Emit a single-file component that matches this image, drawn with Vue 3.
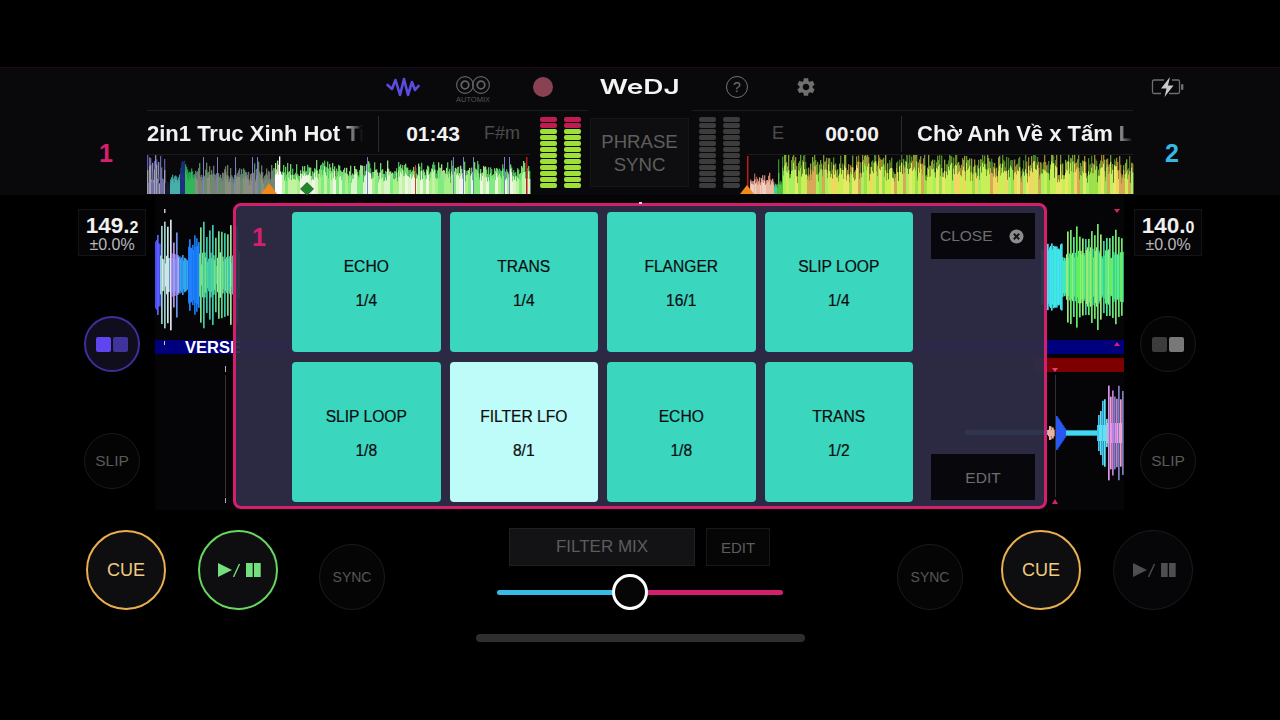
<script setup>
// seeded so the waveforms come out the same on every load
function rng(seed) {
  let s = seed
  return () => {
    s = (s * 1664525 + 1013904223) % 4294967296
    return s / 4294967296
  }
}

const pick = (r, list) => list[Math.floor(r() * list.length)]

function overview(width, height, seed, shape) {
  const r = rng(seed)
  const bars = []
  let colorHold = null
  for (let x = 0; x < width; x++) {
    // colours stay for a couple of pixels so the strip reads as columns, not noise
    const next = shape(x, r)
    if (!colorHold || x % 3 === 0 || next.fixed) colorHold = next
    const h1 = Math.min(height, next.amp * (0.78 + r() * 0.34))
    const h2 = h1 * (0.6 + r() * 0.25)
    bars.push({ x, y: height - h1, h: h1, c: colorHold.back })
    bars.push({ x, y: height - h2, h: h2, c: colorHold.front })
  }
  return bars
}

const leftOverview = overview(383, 39, 7, (x, r) => {
  if (x < 18) return { back: pick(r, ['#5d5da8', '#8a8ac0', '#1a1a30', '#6a6ab0']), front: pick(r, ['#6f6fa0', '#a0a0b0']), amp: r() > 0.3 ? 38 : 14, fixed: true }
  if (x < 23) return { back: '#14142a', front: '#181830', amp: 12, fixed: true }
  if (x < 33) return { back: '#3a9a9a', front: '#46b0a8', amp: 18, fixed: true }
  if (x < 38) return { back: '#1a2a70', front: '#203080', amp: 30, fixed: true }
  if (x < 46) return { back: '#20a048', front: '#30b858', amp: 27, fixed: true }
  if (x < 128) return { back: pick(r, ['#667a5c', '#726f78', '#5e7e70', '#5a8a68']), front: pick(r, ['#8a9080', '#7e8078', '#6e8a70']), amp: 17 + r() * 13 }
  if (x < 133) return { back: x === 132 ? '#ffffff' : '#a8e088', front: '#ffffff', amp: x === 132 ? 39 : 30, fixed: true }
  return {
    back: pick(r, ['#5ec85e', '#78d870', '#a0e090', '#48b860']),
    front: pick(r, ['#a8f088', '#d8f5c8', '#eef5e4', '#80ec80', '#c0f4a0']),
    amp: 21 + r() * 11
  }
})

const rightOverview = overview(386, 39, 23, (x, r) => {
  if (x < 3) return { back: '#000', front: '#000', amp: 0, fixed: true }
  if (x < 27) return { back: pick(r, ['#c88070', '#d8a090', '#a06050']), front: pick(r, ['#f0d0c0', '#e8b8a0']), amp: 20 - (x % 7), fixed: true }
  if (x < 30) return { back: '#30c080', front: '#40d0a0', amp: 10, fixed: true }
  if (x < 35) return { back: '#3a8a30', front: '#50c040', amp: x === 31 ? 38 : 12, fixed: true }
  return {
    back: pick(r, ['#6a9a30', '#5a8a28', '#8aa838', '#a08a30', '#4a7a28']),
    front: pick(r, ['#c8ee58', '#9ce04c', '#e8e868', '#f0d860', '#a8f060', '#d8a858', '#c8f050']),
    amp: r() > 0.2 ? 31 + r() * 10 : 22
  }
})

function bigWave(from, to, center, seed, shape) {
  const r = rng(seed)
  const bars = []
  for (let x = from; x < to; x++) {
    const { amp, color } = shape(x, r)
    bars.push({ x, y: center - amp, h: amp * 2, c: color })
  }
  return bars
}

// x values here are relative to the stage, which starts at 155
const leftTop = bigWave(0, 84, 80, 11, (x, r) => {
  if (x < 5) return { amp: 30 + r() * 14, color: pick(r, ['#4a4ef0', '#5a60ff']) }
  if (x < 16) return { amp: x % 3 === 0 ? 44 + r() * 14 : 10 + r() * 12, color: pick(r, ['#c8e8e0', '#9ad0d0', '#e0e0f0', '#6a8ac8']) }
  if (x < 24) return { amp: x % 3 === 0 ? 32 + r() * 14 : 14 + r() * 8, color: pick(r, ['#b090f0', '#c8a0f0', '#7090e8']) }
  if (x < 33) return { amp: 14 + r() * 8, color: pick(r, ['#3090f0', '#30a8e8']) }
  if (x < 44) return { amp: 24 + r() * 16, color: pick(r, ['#1878f0', '#2080ff']) }
  return { amp: x % 3 === 0 ? 36 + r() * 18 : 8 + r() * 16, color: pick(r, ['#50d890', '#78e088', '#40c8a8', '#a0e8a0']) }
})

const rightTop = bigWave(886, 968, 82, 31, (x, r) => {
  if (x < 907) return { amp: 26 + r() * 8, color: pick(r, ['#40e8e0', '#40d8f0']) }
  if (x < 911) return { amp: 16 + r() * 4, color: '#40e8c0' }
  return { amp: x % 3 === 0 ? 36 + r() * 18 : 18 + r() * 12, color: pick(r, ['#50e890', '#70e870', '#a0e878', '#30d8a0', '#60f060']) }
})

const rightBottom = bigWave(893, 968, 61, 41, (x, r) => {
  if (x < 899) return { amp: 2 + r() * 5, color: '#f0b0a0' }
  if (x < 901) return { amp: 0, color: '#000' }
  if (x < 911) return { amp: 17 - (x - 901) * 1.5, color: '#2858f0' }
  if (x < 942) return { amp: 2.500, color: '#40d8f0' }
  if (x < 952) return { amp: x % 2 ? 14 + r() * 20 : 8, color: pick(r, ['#40c8f8', '#60e0f0']) }
  return { amp: x % 2 ? 28 + r() * 22 : 10, color: pick(r, ['#e090f0', '#c080e0', '#f0a0d0', '#8080c0']) }
})

const meterSegs = Array.from({ length: 12 }, (_, i) => i)

const pads = [
  { name: 'ECHO', val: '1/4' },
  { name: 'TRANS', val: '1/4' },
  { name: 'FLANGER', val: '16/1' },
  { name: 'SLIP LOOP', val: '1/4' },
  { name: 'SLIP LOOP', val: '1/8' },
  { name: 'FILTER LFO', val: '8/1', active: true },
  { name: 'ECHO', val: '1/8' },
  { name: 'TRANS', val: '1/2' }
]
</script>

<template>
  <div class="app">
    <div class="top-band">
      <div class="nav">
        <div class="nav-item w70">
          <svg width="34" height="22" viewBox="0 0 34 22" fill="none" stroke="#5a4ce0" stroke-width="2.600" stroke-linejoin="round" stroke-linecap="round">
            <path d="M1.500 9 L6 13 L9.500 4 L14 19 L18 3 L22 19 L26 6 L29 14 L32.500 10" />
          </svg>
        </div>
        <div class="nav-item w70 automix">
          <svg width="34" height="20" viewBox="0 0 34 20" fill="none" stroke="#626262" stroke-width="1.200">
            <circle cx="9" cy="10" r="8.400" />
            <circle cx="25" cy="10" r="8.400" />
            <circle cx="9" cy="10" r="3.800" stroke-width="1.800" />
            <circle cx="25" cy="10" r="3.800" stroke-width="1.800" />
          </svg>
          <span class="automix-label">AUTOMIX</span>
        </div>
        <div class="nav-item w70"><span class="rec"></span></div>
        <div class="nav-item logo-box"><span class="logo">WeDJ</span></div>
        <div class="nav-item w70"><span class="help">?</span></div>
        <div class="nav-item w68">
          <svg width="22" height="22" viewBox="0 0 24 24" fill="#6f6f6f">
            <path d="M19.14 12.94c.04-.3.06-.61.06-.94 0-.32-.02-.64-.07-.94l2.03-1.58c.18-.14.23-.41.12-.61l-1.92-3.32c-.12-.22-.37-.29-.59-.22l-2.39.96c-.5-.38-1.03-.7-1.62-.94l-.36-2.54c-.04-.24-.24-.41-.48-.41h-3.84c-.24 0-.43.17-.47.41l-.36 2.54c-.59.24-1.13.57-1.62.94l-2.39-.96c-.22-.08-.47 0-.59.22L2.74 8.87c-.12.21-.08.47.12.61l2.03 1.58c-.05.3-.09.63-.09.94s.02.64.07.94l-2.03 1.58c-.18.14-.23.41-.12.61l1.92 3.32c.12.22.37.29.59.22l2.39-.96c.5.38 1.03.7 1.62.94l.36 2.54c.05.24.24.41.48.41h3.84c.24 0 .44-.17.47-.41l.36-2.54c.59-.24 1.13-.56 1.62-.94l2.39.96c.22.08.47 0 .59-.22l1.92-3.32c.12-.22.07-.47-.12-.61l-2.01-1.58zM12 15.6c-1.98 0-3.6-1.62-3.6-3.6s1.62-3.6 3.6-3.6 3.6 1.62 3.6 3.6-1.62 3.6-3.6 3.6z" />
          </svg>
        </div>
        <div class="nav-item battery">
          <svg width="34" height="22" viewBox="0 0 34 22" fill="none">
            <path d="M13 4 H3 a1.500 1.500 0 0 0 -1.500 1.500 V16 a1.500 1.500 0 0 0 1.500 1.500 H10 M21 4 H27 a1.500 1.500 0 0 1 1.500 1.500 V16 a1.500 1.500 0 0 1 -1.500 1.500 H18" stroke="#6e6e6e" stroke-width="1.300" />
            <rect x="30" y="8" width="2.400" height="6" rx="1" fill="#6e6e6e" />
            <path d="M19 1 L10 12.500 H15.500 L13.500 21 L22.500 9.500 H17 Z" fill="#c8c8c8" />
          </svg>
        </div>
      </div>

      <div class="deck-row">
        <div class="deck-num pink">1</div>
        <div class="group group-left">
          <div class="deck">
            <div class="info">
              <div class="title title-left">2in1 Truc Xinh Hot Ti</div>
              <span class="divider"></span>
              <div class="time time-left">01:43</div>
              <div class="key key-left">F#m</div>
            </div>
            <svg class="overview" width="383" height="39" viewBox="0 0 383 39">
              <rect v-for="(b, i) in leftOverview" :key="i" :x="b.x" :y="b.y" width="1.300" :height="b.h" :fill="b.c" />
              <rect v-for="x in [56, 70, 88, 105, 110, 220, 306, 316, 326, 357, 362]" :key="x" :x="x" y="2" width="1" height="37" fill="#7c80c8" />
              <rect x="268" y="10" width="1" height="29" fill="#c04020" />
              <rect x="379" y="2" width="1.500" height="37" fill="#c01818" />
              <path d="M114 39 L122 28 L130 39 Z" fill="#f08a1c" />
              <path d="M160 27.500 L166.500 34 L160 40 L153.500 34 Z" fill="#1c8a28" stroke="#0c3010" stroke-width="0.600" />
            </svg>
          </div>
          <div class="meter">
            <div class="meter-col" v-for="c in 2" :key="c">
              <span v-for="s in meterSegs" :key="s" class="seg" :class="s < 2 ? 'seg-red' : 'seg-green'"></span>
            </div>
          </div>
        </div>

        <div class="phrase">PHRASE<br />SYNC</div>

        <div class="group group-right">
          <div class="meter meter-off">
            <div class="meter-col" v-for="c in 2" :key="c">
              <span v-for="s in meterSegs" :key="s" class="seg seg-off"></span>
            </div>
          </div>
          <div class="deck deck-right">
            <div class="info">
              <div class="key key-right">E</div>
              <div class="time time-right">00:00</div>
              <span class="divider divider-right"></span>
              <div class="title title-right">Chờ Anh Về x Tấm L</div>
            </div>
            <svg class="overview" width="386" height="39" viewBox="0 0 386 39">
              <rect v-for="(b, i) in rightOverview" :key="i" :x="b.x" :y="b.y" width="1.300" :height="b.h" :fill="b.c" />
              <rect x="0" y="1" width="1.500" height="38" fill="#c01818" />
              <path d="M-7 39 L0 30 L7 39 Z" fill="#f08a1c" />
            </svg>
          </div>
        </div>
        <div class="deck-num num-right blue">2</div>
      </div>
    </div>

    <div class="stage">
      <div class="side side-left">
        <div class="bpm">
          <div class="bpm-main">149.<small>2</small></div>
          <div class="bpm-sub">±0.0%</div>
        </div>
        <div class="round phase phase-on"><span class="sq sq-a"></span><span class="sq sq-b"></span></div>
        <div class="round slip">SLIP</div>
      </div>

      <div class="center">
        <svg class="wave wave-top" width="969" height="145" viewBox="0 0 969 145">
          <rect v-for="(b, i) in leftTop" :key="'l' + i" :x="b.x" :y="b.y" width="1.700" :height="b.h" :fill="b.c" />
          <rect v-for="(b, i) in rightTop" :key="'r' + i" :x="b.x" :y="b.y" width="1.700" :height="b.h" :fill="b.c" />
          <rect x="9" y="14" width="1.500" height="4" fill="#c8c8c8" />
          <path d="M959 14 L965 14 L962 18 Z" fill="#d6206f" />
        </svg>
        <div class="phrase-bar">
          <span class="tick"></span>
          <span class="verse">VERSE</span>
          <span class="cue-mark"></span>
        </div>
        <div class="red-row"><span class="red-bar"></span></div>
        <svg class="wave wave-bottom" width="969" height="138" viewBox="0 0 969 138">
          <rect x="810" y="58" width="83" height="5" fill="#40d8f0" />
          <rect v-for="(b, i) in rightBottom" :key="i" :x="b.x" :y="b.y" width="1.700" :height="b.h" :fill="b.c" />
          <rect x="70" y="-6" width="1" height="6" fill="#b0b0b0" />
          <rect x="70" y="3" width="1" height="122" fill="#333" />
          <rect x="70" y="126" width="1" height="5" fill="#b0b0b0" />
          <path d="M897 -4 L903 -4 L900 0 Z" fill="#e04080" />
          <rect x="900" y="3" width="1" height="122" fill="#303030" />
          <path d="M897 132 L903 132 L900 127 Z" fill="#d6206f" />
        </svg>

        <!-- fx pad panel sits over the waveforms -->
        <div class="panel">
          <div class="panel-num">1</div>
          <div class="pads">
            <div v-for="(p, i) in pads" :key="i" class="pad" :class="{ 'pad-on': p.active }">
              <span>{{ p.name }}</span>
              <span>{{ p.val }}</span>
            </div>
          </div>
          <div class="panel-side">
            <div class="panel-btn close-btn">
              <span>CLOSE</span>
              <svg width="15" height="15" viewBox="0 0 15 15">
                <circle cx="7.500" cy="7.500" r="7" fill="#8c8c8c" />
                <path d="M4.800 4.800 L10.200 10.200 M10.200 4.800 L4.800 10.200" stroke="#15151a" stroke-width="2" />
              </svg>
            </div>
            <div class="panel-btn edit-btn">EDIT</div>
          </div>
        </div>
        <span class="panel-tick"></span>
      </div>

      <div class="side side-right">
        <div class="bpm">
          <div class="bpm-main">140.<small>0</small></div>
          <div class="bpm-sub">±0.0%</div>
        </div>
        <div class="round phase"><span class="sq sq-c"></span><span class="sq sq-d"></span></div>
        <div class="round slip">SLIP</div>
      </div>
    </div>

    <div class="controls">
      <div class="big cue">CUE</div>
      <div class="big play play-on">
        <svg class="play-icon" width="44" height="14" viewBox="0 0 44 14" fill="currentColor">
          <path d="M0 0 L14 7 L0 14 Z" />
          <path d="M15.500 14 L21.500 1" stroke="currentColor" stroke-width="1.400" fill="none" />
          <rect x="28" y="0" width="6.700" height="14" />
          <rect x="36" y="0" width="6.700" height="14" />
        </svg>
      </div>
      <div class="sync sync-left">SYNC</div>

      <div class="mixer">
        <div class="mixer-top">
          <div class="filter-mix">FILTER MIX</div>
          <div class="mixer-edit">EDIT</div>
        </div>
        <div class="slider">
          <span class="slider-blue"></span>
          <span class="slider-pink"></span>
          <span class="knob"></span>
        </div>
      </div>

      <div class="sync sync-right">SYNC</div>
      <div class="big cue cue-right">CUE</div>
      <div class="big play play-off">
        <svg class="play-icon" width="44" height="14" viewBox="0 0 44 14" fill="currentColor">
          <path d="M0 0 L14 7 L0 14 Z" />
          <path d="M15.500 14 L21.500 1" stroke="currentColor" stroke-width="1.400" fill="none" />
          <rect x="28" y="0" width="6.700" height="14" />
          <rect x="36" y="0" width="6.700" height="14" />
        </svg>
      </div>
    </div>

    <div class="home-bar"></div>
  </div>
</template>

<style>
html,
body {
  background: #000;
}
</style>

<style scoped>
.app {
  width: 1280px;
  height: 720px;
  background: #000;
  overflow: hidden;
  font-family: "Liberation Sans", Arial, sans-serif;
  display: flex;
  flex-direction: column;
}

.top-band {
  margin-top: 67px;
  height: 128px;
  box-sizing: border-box;
  background: #09090b;
  border-top: 1px solid #1c0a1a;
  flex: none;
}

.nav {
  height: 42px;
  display: flex;
  padding-left: 368px;
  padding-bottom: 4px;
  box-sizing: border-box;
}

.nav-item {
  display: flex;
  align-items: center;
  justify-content: center;
  height: 100%;
}

.w70 {
  width: 70px;
}

.w68 {
  width: 68px;
}

.automix {
  flex-direction: column;
  gap: 1px;
  padding-top: 4px;
  box-sizing: border-box;
}

.automix-label {
  font-size: 7.500px;
  color: #555;
  line-height: 8px;
}

.rec {
  width: 20px;
  height: 20px;
  border-radius: 50%;
  background: #8a4252;
}

.logo-box {
  width: 124px;
}

.logo {
  font-family: Inter, sans-serif;
  font-size: 20px;
  font-weight: 600;
  color: #f4f4f4;
  transform: scaleX(1.4);
}

.help {
  width: 20px;
  height: 20px;
  border: 1px solid #707070;
  border-radius: 50%;
  color: #707070;
  font-size: 14px;
  line-height: 20px;
  text-align: center;
}

.battery {
  margin-left: 311px;
}

.deck-row {
  display: flex;
  height: 85px;
}

.deck-num {
  width: 147px;
  box-sizing: border-box;
  padding-left: 65px;
  padding-top: 2px;
  display: flex;
  align-items: center;
  justify-content: center;
  font-size: 25px;
  font-weight: 700;
  flex: none;
}

.num-right {
  padding-left: 0;
  padding-right: 69px;
}

.pink {
  color: #d61f6e;
}

.blue {
  color: #35b8e6;
}

.group {
  width: 441px;
  flex: none;
  display: flex;
  border-top: 1px solid #1c1c1e;
  box-sizing: border-box;
}

.group-left {
  margin-right: 2px;
}

.group-right {
  margin-left: 3px;
  padding-left: 7px;
}

.deck {
  width: 383px;
  flex: none;
}

.deck-right {
  width: 386px;
  margin-left: 7px;
  margin-right: -2px;
}

.info {
  height: 44px;
  box-sizing: border-box;
  padding-top: 2px;
  display: flex;
  align-items: center;
  border-bottom: 1px solid #1c1c1e;
}

.title {
  font-size: 22px;
  font-weight: 700;
  color: #f2f2f2;
  white-space: nowrap;
  overflow: hidden;
}

.title-left {
  width: 216px;
  flex: none;
  margin-right: 15px;
  mask-image: linear-gradient(to right, #000 90%, transparent 100%);
}

.title-right {
  flex: 1;
  margin-left: 15px;
  min-width: 0;
  mask-image: linear-gradient(to right, #000 90%, transparent 100%);
}

.divider {
  width: 1px;
  height: 36px;
  background: #2a2a2c;
  flex: none;
}

.time {
  font-size: 21px;
  font-weight: 700;
  color: #f2f2f2;
  width: 90px;
  text-align: center;
  flex: none;
}

.time-left {
  margin-left: 9px;
}

.key {
  font-size: 18px;
  color: #4c4c4c;
  flex: none;
}

.key-left {
  margin-left: 6px;
}

.key-right {
  margin-left: 25px;
  width: 12px;
  text-align: center;
}

.time-right {
  margin-left: 23px;
}

.divider-right {
  margin-left: 4px;
}

.overview {
  display: block;
  overflow: visible;
  filter: blur(0.5px);
}

.meter {
  margin-left: 10px;
  padding-top: 6px;
  display: flex;
  gap: 7px;
  height: 72px;
}

.meter-off {
  margin-left: 0;
}

.meter-col {
  width: 17px;
  display: flex;
  flex-direction: column;
  justify-content: space-between;
  height: 71px;
}

.seg {
  height: 4.700px;
  border-radius: 2px;
  display: block;
}

.seg-red {
  background: #c01c52;
}

.seg-green {
  background: #9ee038;
}

.seg-off {
  background: #3c3c3c;
}

.phrase {
  width: 99px;
  height: 69px;
  margin-top: 8px;
  box-sizing: border-box;
  border: 1px solid #151517;
  background: #0e0e10;
  flex: none;
  color: #5e5e5e;
  font-size: 18.600px;
  line-height: 23px;
  text-align: center;
  padding-top: 11px;
}

.stage {
  height: 315px;
  display: flex;
  flex: none;
}

.side {
  display: flex;
  flex-direction: column;
  align-items: center;
  box-sizing: border-box;
  flex: none;
}

.side-left {
  width: 155px;
  padding-left: 78px;
  padding-right: 9px;
}

.side-right {
  width: 156px;
  padding-left: 10px;
  padding-right: 78px;
}

.bpm {
  margin-top: 14px;
  width: 68px;
  height: 47px;
  box-sizing: border-box;
  border: 1px solid #141416;
  background: #050507;
  text-align: center;
  color: #f0f0f0;
  flex: none;
}

.bpm-main {
  font-size: 22.500px;
  font-weight: 700;
  line-height: 22px;
  margin-top: 5px;
}

.bpm-main small {
  font-size: 16px;
}

.bpm-sub {
  font-size: 16px;
  line-height: 12px;
  color: #b8b8b8;
}

.round {
  width: 56px;
  height: 56px;
  box-sizing: border-box;
  border-radius: 50%;
  border: 1.500px solid #1a1a1d;
  background: #040405;
  display: flex;
  align-items: center;
  justify-content: center;
  flex: none;
}

.phase {
  margin-top: 60px;
  gap: 2px;
}

.phase-on {
  border: 2px solid #3c2f9c;
  background: #100e1c;
}

.sq {
  width: 15px;
  height: 15px;
  border-radius: 2px;
}

.sq-a {
  background: #5f45f0;
}

.sq-b {
  background: #40349c;
}

.sq-c {
  background: #3c3c3c;
}

.sq-d {
  background: #787878;
}

.slip {
  margin-top: 61px;
  color: #5a5a5a;
  font-size: 15.500px;
}

.center {
  width: 969px;
  flex: none;
  position: relative;
  background: #050507;
}

.wave {
  display: block;
  overflow: visible;
  filter: blur(0.5px);
}

.phrase-bar {
  height: 14px;
  background: #00007c;
  position: relative;
  display: flex;
  align-items: center;
  padding-left: 30px;
}

.tick {
  position: absolute;
  left: 9px;
  top: 1px;
  width: 1px;
  height: 4px;
  background: #c8c8c8;
}

.cue-mark {
  position: absolute;
  right: 4px;
  top: 2px;
  width: 0;
  height: 0;
  border-left: 3px solid transparent;
  border-right: 3px solid transparent;
  border-bottom: 4px solid #d6206f;
}

.verse {
  color: #fff;
  font-size: 16.500px;
  font-weight: 700;
  line-height: 14px;
}

.red-row {
  height: 18px;
  padding-top: 4px;
  box-sizing: border-box;
  display: flex;
  justify-content: flex-end;
}

.red-bar {
  width: 90px;
  height: 14px;
  background: #7c0000;
  display: block;
}

.panel {
  position: absolute;
  left: 78px;
  top: 8px;
  width: 814px;
  height: 306px;
  box-sizing: border-box;
  background: rgba(46, 43, 70, 0.95);
  border: 3px solid #d41f6f;
  border-radius: 8px;
  display: flex;
}

.panel-num {
  width: 56px;
  flex: none;
  padding-right: 10px;
  color: #d41f6f;
  font-size: 25px;
  font-weight: 700;
  text-align: center;
  padding-top: 17px;
  box-sizing: border-box;
}

.pads {
  width: 621px;
  margin-top: 6px;
  flex: none;
  display: grid;
  grid-template-columns: repeat(4, 148.500px);
  grid-template-rows: 140px 140px;
  column-gap: 9px;
  row-gap: 10px;
}

.pad {
  background: #3ad6bd;
  border-radius: 4px;
  display: flex;
  flex-direction: column;
  align-items: center;
  justify-content: center;
  gap: 16px;
  padding-top: 4px;
  box-sizing: border-box;
  font-size: 15.600px;
  line-height: 18px;
  color: #0c0c10;
  -webkit-text-stroke: 0.2px #0c0c10;
}

.pad-on {
  background: #bdfcf8;
}

.panel-side {
  flex: 1;
  padding: 7px 9px 6px 18px;
  display: flex;
  flex-direction: column;
  justify-content: space-between;
}

.panel-btn {
  background: #08080c;
  color: #6e6e6e;
  font-size: 15.500px;
  display: flex;
  align-items: center;
  box-sizing: border-box;
}

.close-btn {
  width: 104px;
  height: 46px;
  padding-left: 9px;
  gap: 16px;
}

.edit-btn {
  width: 104px;
  height: 46px;
  padding-top: 1px;
  justify-content: center;
}

.panel-tick {
  position: absolute;
  left: 484px;
  top: 7px;
  width: 3px;
  height: 2px;
  background: #d8d8d8;
}

.controls {
  height: 124px;
  display: flex;
  padding-left: 86px;
  padding-top: 20px;
  box-sizing: border-box;
  flex: none;
}

.big {
  width: 80px;
  height: 80px;
  box-sizing: border-box;
  border-radius: 50%;
  background: #0e0e10;
  display: flex;
  align-items: center;
  justify-content: center;
  flex: none;
}

.play-icon {
  margin-left: 4px;
}

.cue {
  border: 2px solid #eab04e;
  color: #f0cc7e;
  font-size: 18px;
}

.play {
  margin-left: 32px;
}

.play-on {
  border: 2px solid #66d860;
  color: #72e07c;
}

.play-off {
  border: 1.500px solid #1b1b1d;
  background: #060608;
  color: #4e4e4e;
}

.sync {
  width: 66px;
  height: 66px;
  box-sizing: border-box;
  border: 1.500px solid #1b1b1d;
  border-radius: 50%;
  background: #050506;
  color: #565656;
  font-size: 14px;
  display: flex;
  align-items: center;
  justify-content: center;
  margin-top: 14px;
  flex: none;
}

.sync-left {
  margin-left: 41px;
}

.sync-right {
  margin-left: 114px;
}

.cue-right {
  margin-left: 38px;
}

.mixer {
  width: 286px;
  margin-left: 112px;
  margin-top: -2px;
  flex: none;
}

.mixer-top {
  display: flex;
  gap: 11px;
  padding-left: 12px;
}

.filter-mix {
  width: 186px;
  height: 38px;
  box-sizing: border-box;
  border: 1px solid #1f1f22;
  background: #131316;
  color: #5c5c5c;
  font-size: 17px;
  display: flex;
  align-items: center;
  justify-content: center;
}

.mixer-edit {
  width: 64px;
  height: 38px;
  box-sizing: border-box;
  border: 1.500px solid #18181a;
  background: #060607;
  color: #5c5c5c;
  font-size: 15px;
  display: flex;
  align-items: center;
  justify-content: center;
}

.slider {
  position: relative;
  margin-top: 7px;
  height: 38px;
  display: flex;
  align-items: center;
}

.slider-blue {
  width: 133px;
  height: 5px;
  background: #35bde6;
  border-radius: 2.500px 0 0 2.500px;
}

.slider-pink {
  flex: 1;
  height: 5px;
  background: #d41f6f;
  border-radius: 0 2.500px 2.500px 0;
}

.knob {
  position: absolute;
  left: 115px;
  top: 1px;
  width: 36px;
  height: 36px;
  box-sizing: border-box;
  border: 3px solid #fff;
  border-radius: 50%;
  background: #060607;
}

.home-bar {
  width: 329px;
  height: 8px;
  margin-left: 476px;
  border-radius: 4px;
  background: #2e2e2e;
  flex: none;
}
</style>
